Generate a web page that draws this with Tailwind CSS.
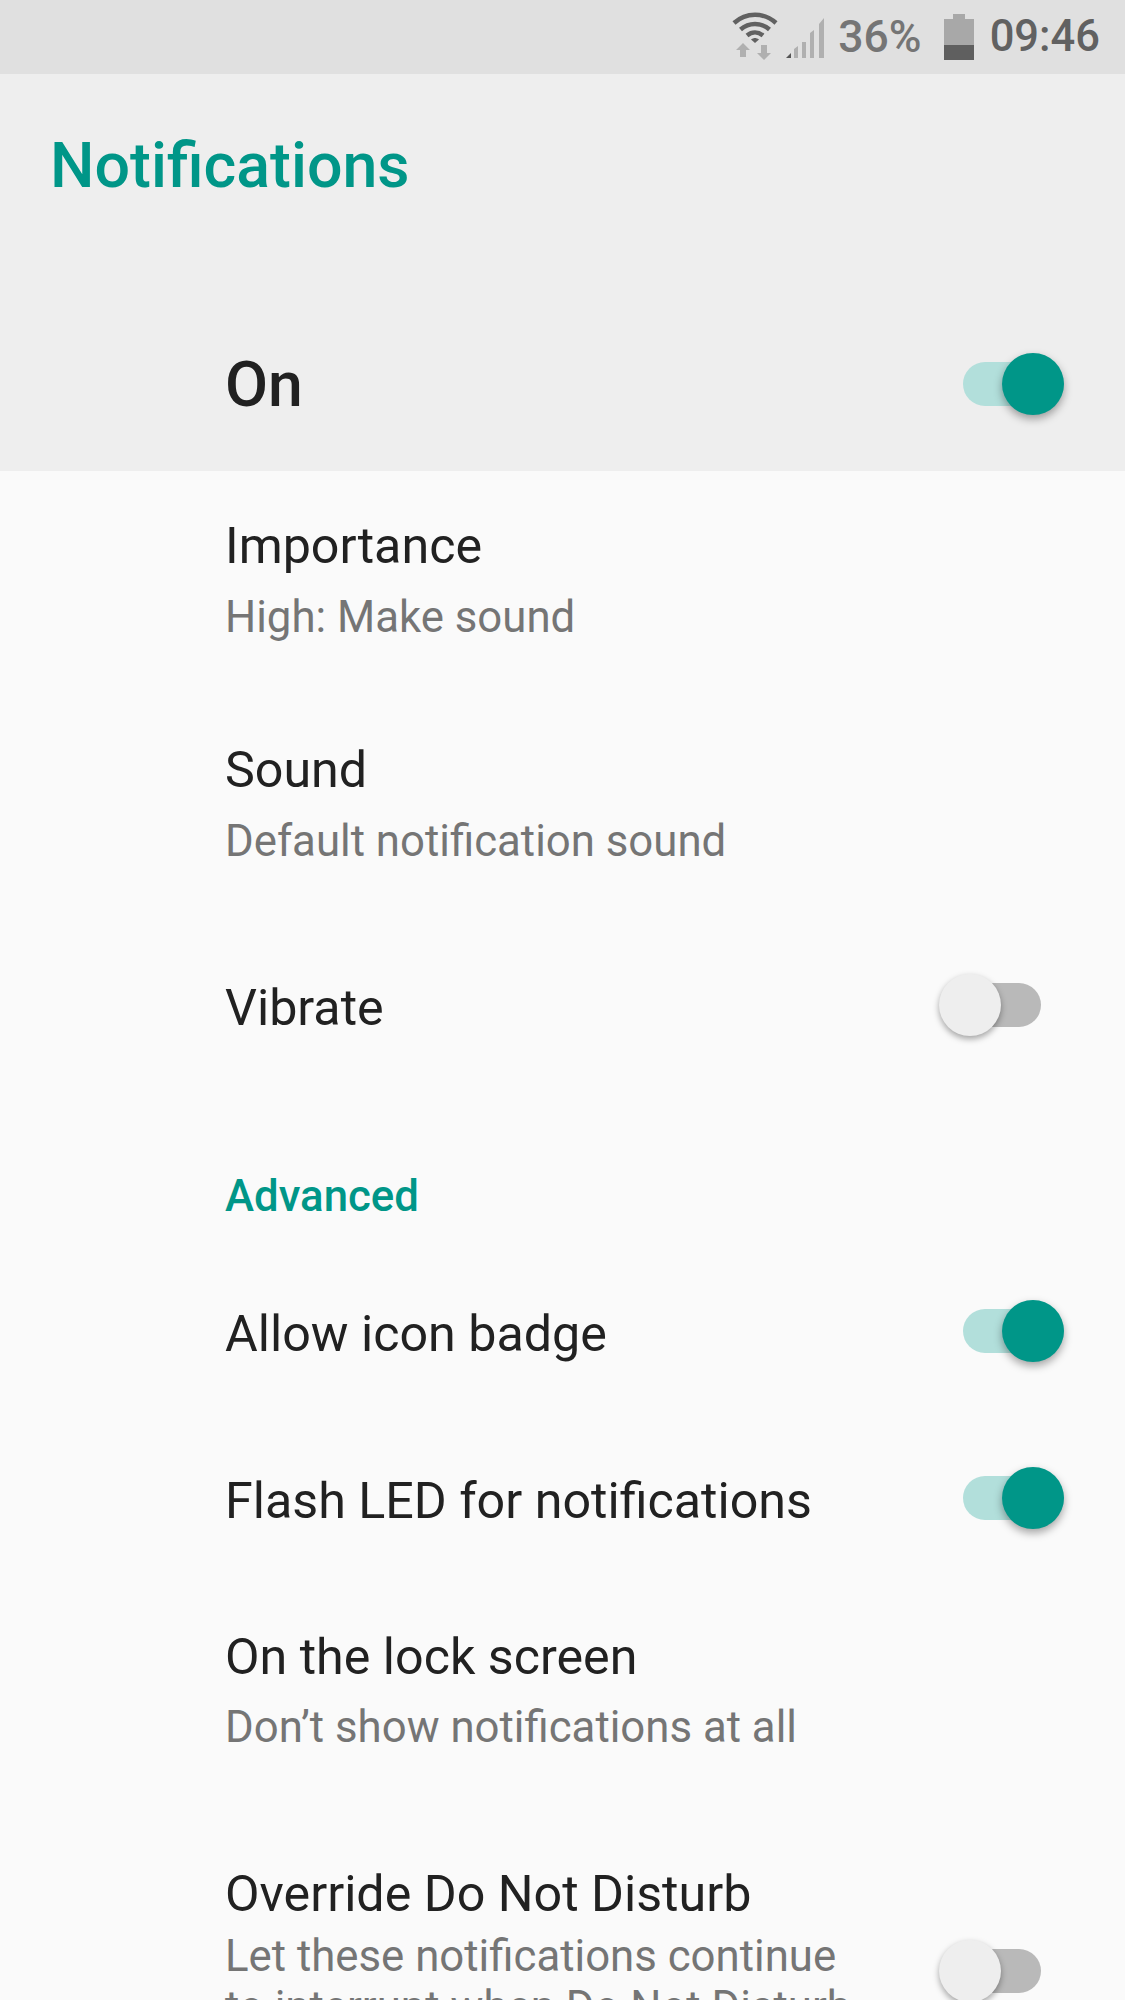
<!DOCTYPE html>
<html>
<head>
    <meta charset="utf-8">
    <title>Notifications</title>
    <script src="https://cdn.jsdelivr.net/npm/@tailwindcss/browser@4"></script>
</head>
<body class="bg-[#fafafa] text-[#212121] font-['Roboto',sans-serif]">
    <div class="h-[2000px] overflow-hidden">
        <!-- status bar -->
        <div class="h-[74px] bg-[#e0e0e0] flex items-center justify-end pr-[25px] text-[#666666]">
            <svg class="w-[46px] h-[48px] mr-[8px] -mt-[2px]" viewBox="0 0 46 48" fill="none">
                <path d="M2 11 C14 0 32 0 44 11" stroke="#616161" stroke-width="4.5"/>
                <path d="M8.5 17.5 C17 10 29 10 37.500 17.500" stroke="#616161" stroke-width="4.500"/>
                <path d="M15 23.500 C20 19.500 26 19.500 31 23.500" stroke="#616161" stroke-width="4.500"/>
                <path d="M19 27.500 C22 25.500 24 25.500 27 27.500 L23 31 Z" fill="#616161"/>
                <path d="M11 31 L18 38 H14 V45 H8 V38 H4 Z" fill="#b0b0b0"/>
                <path d="M29 33 H35 V41 H39 L32 48 L25 41 H29 Z" fill="#b0b0b0"/>
            </svg>
            <svg class="w-[38px] h-[40px] mr-[14px] mt-[2px]" viewBox="0 0 38 40">
                <path d="M0 40 L5 35 V40 Z" fill="#555555"/>
                <path d="M8 31 L12 28 V40 H8 Z M16 24 H20 V40 H16 Z M24 15 L28 12 V40 H24 Z M33 6 L38 0 V40 H33 Z" fill="#b0b0b0"/>
            </svg>
            <span class="text-[44.5px] leading-none font-medium text-[#757575] mr-[22px]">36%</span>
            <svg class="w-[30px] h-[46px] mr-[16px]" viewBox="0 0 30 46">
                <path d="M9 0 H21 V5 H30 V31 H0 V5 H9 Z" fill="#a8a8a8"/>
                <rect x="0" y="31" width="30" height="15" fill="#5f5f5f"/>
            </svg>
            <span class="text-[43.5px] leading-none font-medium text-[#616161]">09:46</span>
        </div>

        <!-- app bar -->
        <div class="h-[397px] bg-[#eeeeee]">
            <div class="h-[184px] pl-[50px] flex items-center">
                <h1 class="text-[62.7px] leading-none font-medium text-[#009688]">Notifications</h1>
            </div>
            <div class="mt-[41px] h-[172px] pl-[225px] pr-[61px] flex items-center justify-between">
                <span class="text-[62.5px] leading-none font-medium">On</span>
                <div class="relative w-[101px] h-[44px] -mt-[2px] rounded-full bg-[#b2dfdb]">
                    <div class="absolute right-0 -top-[9px] w-[62px] h-[62px] rounded-full bg-[#009688] shadow-[0_4px_8px_rgba(0,0,0,0.35)]"></div>
                </div>
            </div>
        </div>

        <!-- settings list -->
        <div class="pl-[225px]">
            <div class="h-[218px] flex flex-col justify-center">
                <div class="text-[50.2px] leading-[60px]">Importance</div>
                <div class="text-[43.75px] leading-[56px] mt-[13px] text-[#757575]">High: Make sound</div>
            </div>
            <div class="h-[231px] flex flex-col justify-center">
                <div class="text-[50.2px] leading-[60px]">Sound</div>
                <div class="text-[43.75px] leading-[56px] mt-[13px] text-[#757575]">Default notification sound</div>
            </div>
            <div class="h-[176px] pr-[84px] flex items-center justify-between">
                <span class="text-[50.2px] leading-[60px]">Vibrate</span>
                <div class="relative w-[100px] h-[44px] -mt-[6px] rounded-full bg-[#b9b9b9]">
                    <div class="absolute -left-[2px] -top-[9px] w-[62px] h-[62px] rounded-full bg-[#eeeeee] shadow-[0_3px_6px_rgba(0,0,0,0.35)]"></div>
                </div>
            </div>
            <div class="h-[154px] pb-[29px] flex items-end">
                <span class="text-[43.75px] leading-[50px] font-medium text-[#009688]">Advanced</span>
            </div>
            <div class="h-[166px] pr-[61px] flex items-center justify-between">
                <span class="text-[50.2px] leading-[60px] mt-[2px]">Allow icon badge</span>
                <div class="relative w-[101px] h-[44px] -mt-[4px] rounded-full bg-[#b2dfdb]">
                    <div class="absolute right-0 -top-[9px] w-[62px] h-[62px] rounded-full bg-[#009688] shadow-[0_4px_8px_rgba(0,0,0,0.35)]"></div>
                </div>
            </div>
            <div class="h-[168px] pr-[61px] flex items-center justify-between">
                <span class="text-[50.2px] leading-[60px] mt-[2px]">Flash LED for notifications</span>
                <div class="relative w-[101px] h-[44px] -mt-[4px] rounded-full bg-[#b2dfdb]">
                    <div class="absolute right-0 -top-[9px] w-[62px] h-[62px] rounded-full bg-[#009688] shadow-[0_4px_8px_rgba(0,0,0,0.35)]"></div>
                </div>
            </div>
            <div class="h-[214px] flex flex-col justify-center">
                <div class="text-[50.2px] leading-[60px]">On the lock screen</div>
                <div class="text-[43.75px] leading-[56px] mt-[12px] text-[#757575]">Don’t show notifications at all</div>
            </div>
            <div class="h-[346px] pr-[84px] flex items-center justify-between">
                <div class="w-[640px] self-start pt-[66px]">
                    <div class="text-[50.2px] leading-[60px]">Override Do Not Disturb</div>
                    <div class="text-[43.75px] leading-[51px] mt-[7px] text-[#757575]">Let these notifications continue to interrupt when Do Not Disturb is set to Priority Only</div>
                </div>
                <div class="relative w-[100px] h-[44px] rounded-full bg-[#b9b9b9]">
                    <div class="absolute -left-[2px] -top-[9px] w-[62px] h-[62px] rounded-full bg-[#eeeeee] shadow-[0_3px_6px_rgba(0,0,0,0.35)]"></div>
                </div>
            </div>
        </div>
    </div>
</body>
</html>
